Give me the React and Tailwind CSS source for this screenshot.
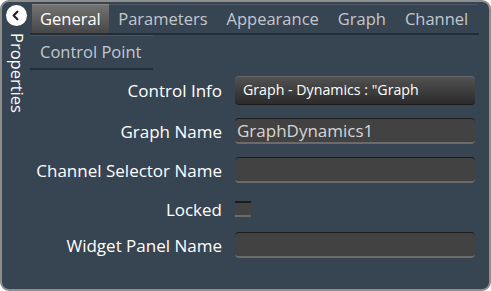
import { ChevronLeft } from "lucide-react";

const tabs = ["General", "Parameters", "Appearance", "Graph", "Channel"];

function Field({ label, children, h = "h-[26px]", mt = "mt-[13px]" }) {
  return (
    <div className={`flex items-center ${h} ${mt}`}>
      <div className="w-[192px] shrink-0 text-right text-white text-[17px] leading-none whitespace-nowrap">{label}</div>
      <div className="ml-[13px] flex-1 min-w-0 h-full flex items-center">{children}</div>
    </div>
  );
}

function TextBox({ value }) {
  return (
    <div className="w-full h-full rounded-[4px] bg-[#424242] border-t border-t-[#1c1c1c] border-b-2 border-b-[#6b6b6b] flex items-center px-[2px] text-[17px] text-[#d6d6d6] leading-none">
      {value}
    </div>
  );
}

export default function App() {
  return (
    <div
      className="w-[491px] h-[291px] bg-[#374451] border-2 border-[#8e8e8e] rounded-[9px] flex overflow-hidden"
      style={{ fontFamily: '"Open Sans", "Noto Sans", sans-serif' }}
    >
      <div className="w-[28px] shrink-0 flex flex-col items-center pt-[3px]">
        <div className="w-[21px] h-[21px] rounded-full bg-white flex items-center justify-center">
          <ChevronLeft size={15} strokeWidth={3.5} color="#1f2329" className="-ml-[1px]" />
        </div>
        <div className="mt-[7px] text-white text-[16.5px] leading-none [writing-mode:vertical-rl] ml-[2px]">Properties</div>
      </div>

      <div className="flex-1 min-w-0 flex flex-col">
        <div className="flex h-[33px] pt-[2px] mr-[10px] border-b-2 border-[#222d37] overflow-hidden">
          {tabs.map((t, i) => (
            <div
              key={t}
              className={
                i === 0
                  ? "ml-[2px] px-[8px] shrink-0 flex items-center text-[16.5px] text-white bg-gradient-to-b from-[#737373] to-[#474747] border-t border-[#8a8a8a]"
                  : "px-[9.5px] shrink-0 flex items-center text-[16.5px] text-[#c3c8ce] border-t border-[#4a5866]"
              }
            >
              {t}
            </div>
          ))}
        </div>
        <div className="flex">
          <div className="h-[35px] w-[123px] flex items-center pl-[10px] text-[16.5px] text-[#c3c8ce] border-b-2 border-[#222d37] border-t border-t-[#4a5866]">
            Control Point
          </div>
        </div>

        <div className="flex flex-col pr-[14px]">
          <Field label="Control Info" h="h-[29px]" mt="mt-[6px]">
            <div className="w-full h-full rounded-[4px] bg-gradient-to-b from-[#525252] to-[#2b2b2b] border-t border-t-[#6a6a6a] border-b border-b-[#1a1a1a] flex items-center pl-[8px] text-[14.2px] text-white leading-none whitespace-nowrap overflow-hidden">
              Graph - Dynamics : "Graph
            </div>
          </Field>
          <Field label="Graph Name">
            <TextBox value="GraphDynamics1" />
          </Field>
          <Field label="Channel Selector Name">
            <TextBox value="" />
          </Field>
          <Field label="Locked">
            <div className="w-[16px] h-[16px] bg-[#424242] border-t-2 border-t-[#1c1c1c] border-b-2 border-b-[#6b6b6b]" />
          </Field>
          <Field label="Widget Panel Name" mt="mt-[10px]">
            <TextBox value="" />
          </Field>
        </div>
      </div>
    </div>
  );
}
